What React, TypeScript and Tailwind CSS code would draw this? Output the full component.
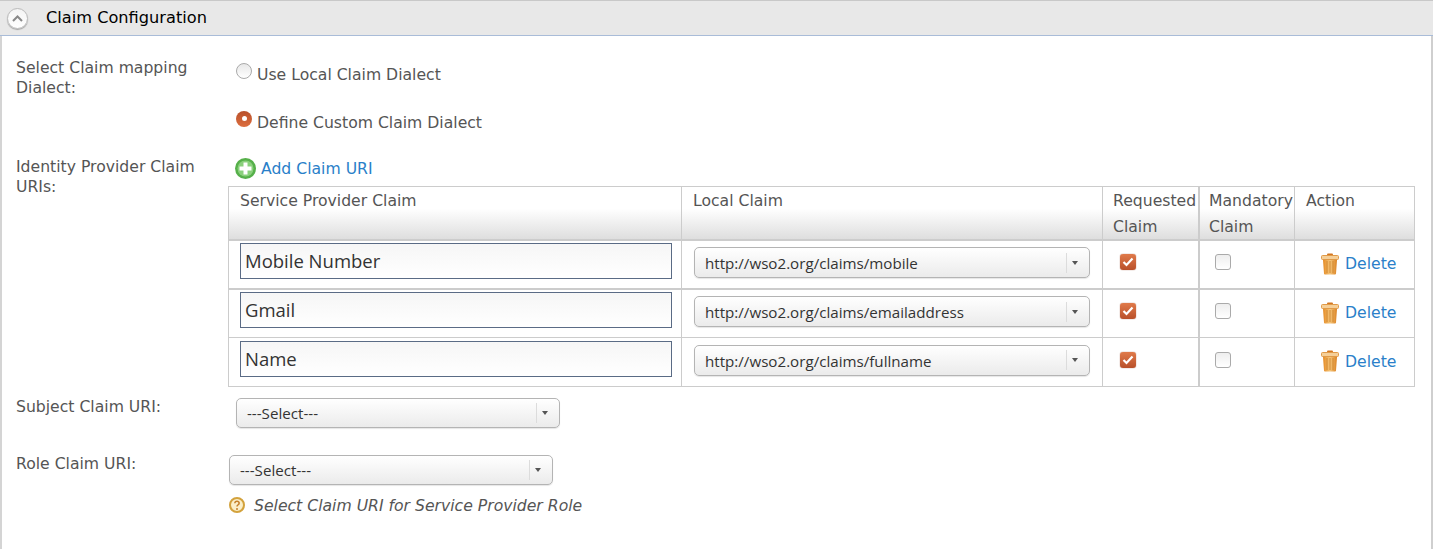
const font = "font-['DejaVu_Sans',sans-serif]";

const SelectBox = ({ label, width, height = "h-[30px]" }: { label: string; width: string; height?: string }) => {
    return (
        <div className={`${width} ${height} flex items-center rounded-[5px] border border-[#b4b4b4] bg-gradient-to-b from-white to-[#ebebeb] shadow-[0_1px_1px_rgba(0,0,0,0.1)]`}>
            <span className="flex-1 pl-[10px] pt-[2px] font-['Open_Sans',sans-serif] text-[15.15px] text-[#333]">{label}</span>
            <span className="h-[20px] w-px bg-[#dcdcdc]" />
            <span className="mr-[6px] flex w-[16px] justify-center">
                <span className="h-0 w-0 border-x-[3px] border-t-[4px] border-x-transparent border-t-[#555]" />
            </span>
        </div>
    );
};

const TrashIcon = () => {
    return (
        <svg width="18" height="22" viewBox="0 0 18 22">
            <defs>
                <linearGradient id="trash" x1="0" x2="1" y1="0" y2="0">
                    <stop offset="0" stopColor="#e58a22" />
                    <stop offset="0.5" stopColor="#f5c67c" />
                    <stop offset="1" stopColor="#db8120" />
                </linearGradient>
            </defs>
            <rect x="6" y="0.5" width="6" height="3" rx="1" fill="#d4761f" />
            <rect x="0.5" y="2.5" width="17" height="4" rx="1" fill="#f5cf98" stroke="#e09a48" />
            <path d="M2 7h14l-1 13.5q0 1-1 1H4q-1 0-1-1z" fill="url(#trash)" />
            <path d="M6 8v12M9 8v12M12 8v12" stroke="#d28a32" strokeWidth="1" />
        </svg>
    );
};

const PlusIcon = () => {
    return (
        <svg width="21" height="21" viewBox="0 0 21 21">
            <circle cx="10.5" cy="10.5" r="10.5" fill="#56b04a" />
            <circle cx="10.5" cy="10.5" r="8" fill="#8ad07c" />
            <path d="M10.5 4.5v12M4.5 10.5h12" stroke="#fff" strokeWidth="4" />
        </svg>
    );
};

const HelpIcon = () => {
    return (
        <svg width="16" height="16" viewBox="0 0 16 16">
            <circle cx="8" cy="8" r="7" fill="#fbefc8" stroke="#d3a23c" strokeWidth="2" />
            <path d="M5.8 6.2q.2-2 2.2-2t2.2 1.9q0 1.1-1.2 1.8-1 .5-1 1.7" fill="none" stroke="#c5802a" strokeWidth="1.5" />
            <circle cx="8" cy="12" r="1" fill="#c5802a" />
        </svg>
    );
};

const Checked = () => {
    return (
        <span className="flex h-[16px] w-[16px] items-center justify-center rounded-[3px] bg-gradient-to-b from-[#e07a4a] to-[#b9502a] shadow-[0_0_1px_#8a3a1c]">
            <svg width="12" height="10" viewBox="0 0 12 10">
                <path d="M1.5 5l3 3L10.5 1.5" fill="none" stroke="#fff" strokeWidth="2.2" />
            </svg>
        </span>
    );
};

// the third row sits 1px closer to its top border, so its cells need 1px more padding
const rows = [
    { name: "Mobile Number", claim: "http://wso2.org/claims/mobile", rowClass: "h-[49px] border-b-2 border-[#cccccc]", inputPad: "pt-[2px]", selectPad: "pt-[6px]", boxPad: "pt-[13px]", deletePad: "pt-[11px]" },
    { name: "Gmail", claim: "http://wso2.org/claims/emailaddress", rowClass: "h-[48px]", inputPad: "pt-[2px]", selectPad: "pt-[6px]", boxPad: "pt-[13px]", deletePad: "pt-[11px]" },
    { name: "Name", claim: "http://wso2.org/claims/fullname", rowClass: "h-[49px]", inputPad: "pt-[3px]", selectPad: "pt-[7px]", boxPad: "pt-[14px]", deletePad: "pt-[12px]" },
];

const headCell = "border border-[#cccccc] border-b-2 pt-[1px] align-top text-left font-normal leading-[25.5px] text-[#555]";
const bodyCell = "border border-[#cccccc] align-top";

const App = () => {
    return (
        <div className={`h-[549px] w-[1436px] overflow-hidden bg-white text-[15.65px] text-[#555] ${font}`}>
            <div className="h-full w-[1433px] border-x-2 border-x-[#d4d4d4] border-r-[#cfcfcf]">
                <div className="-ml-[2px] flex h-[36px] w-[1433px] items-center border-t border-b border-t-[#c8c8c8] border-b-[#a9bcd8] bg-[#e8e8e8]">
                    <span className="ml-[7px] flex h-[21px] w-[21px] items-center justify-center rounded-full border border-[#bbb] bg-gradient-to-b from-[#f4f4f4] to-white shadow-[0_1px_1px_rgba(0,0,0,0.3)]">
                        <svg width="11" height="8" viewBox="0 0 11 8">
                            <path d="M1 7l4.5-4.5L10 7" fill="none" stroke="#888" strokeWidth="2" />
                        </svg>
                    </span>
                    <span className="ml-[18px] text-[16.2px] text-black">Claim Configuration</span>
                </div>

                <div className="flex pt-[22px]">
                    <div className="w-[234px] pl-[14px] leading-[20px]">
                        <p className="w-[190px]">Select Claim mapping Dialect:</p>
                    </div>
                    <div className="pt-[7px]">
                        <label className="flex h-[21px] items-center gap-[5px]">
                            <span className="mb-[10px] h-[16px] w-[16px] rounded-full border border-[#aaa] bg-gradient-to-b from-[#e8e8e8] to-white" />
                            <span className="pb-[2px]">Use Local Claim Dialect</span>
                        </label>
                        <label className="mt-[27px] flex h-[21px] items-center gap-[5px]">
                            <span className="mb-[10px] flex h-[16px] w-[16px] items-center justify-center rounded-full bg-gradient-to-b from-[#b8502a] to-[#dd6e3f]">
                                <span className="h-[5px] w-[5px] rounded-full bg-white" />
                            </span>
                            <span className="pb-[2px]">Define Custom Claim Dialect</span>
                        </label>
                    </div>
                </div>

                <div className="mt-[23px] flex">
                    <div className="w-[226px] pl-[14px] leading-[20px]">
                        <p className="w-[190px]">Identity Provider Claim URIs:</p>
                    </div>
                    <div>
                        <div className="ml-[7px] mt-[1px] flex h-[21px] items-center gap-[5px] text-[#2a7fc9]">
                            <PlusIcon />
                            <span className="pt-[1px]">Add Claim URI</span>
                        </div>
                        <table className="mt-[7px] w-[1187px] table-fixed border-collapse">
                            <thead>
                                <tr className="h-[52px] bg-gradient-to-b from-white from-40% to-[#dcdcdc]">
                                    <th className={`${headCell} w-[453px] pl-[11px]`}>Service Provider Claim</th>
                                    <th className={`${headCell} w-[421px] pl-[11px]`}>Local Claim</th>
                                    <th className={`${headCell} w-[96px] whitespace-nowrap border-r-2 pl-[10px]`}>Requested<br />Claim</th>
                                    <th className={`${headCell} w-[96px] whitespace-nowrap pl-[9.5px]`}>Mandatory<br />Claim</th>
                                    <th className={`${headCell} pl-[11px]`}>Action</th>
                                </tr>
                            </thead>
                            <tbody>
                                {rows.map((row) => (
                                    <tr key={row.name} className={row.rowClass}>
                                        <td className={`${bodyCell} px-[11px] ${row.inputPad}`}>
                                            <div className="flex h-[36px] w-[432px] items-center border border-[#5a6b85] bg-gradient-to-b from-[#f6f6f6] to-white pl-[4px] font-['Open_Sans',sans-serif] text-[18.5px] text-[#333]">
                                                {row.name}
                                            </div>
                                        </td>
                                        <td className={`${bodyCell} px-[12px] ${row.selectPad}`}>
                                            <SelectBox label={row.claim} width="w-[396px]" height="h-[31px]" />
                                        </td>
                                        <td className={`${bodyCell} border-r-2 pl-[17px] ${row.boxPad}`}><Checked /></td>
                                        <td className={`${bodyCell} pl-[15px] ${row.boxPad}`}>
                                            <span className="block h-[16px] w-[16px] rounded-[3px] border border-[#aaa] bg-gradient-to-b from-[#eee] to-white" />
                                        </td>
                                        <td className={`${bodyCell} pl-[26px] ${row.deletePad}`}>
                                            <div className="flex items-center gap-[6px] text-[#2a7fc9]">
                                                <TrashIcon />
                                                Delete
                                            </div>
                                        </td>
                                    </tr>
                                ))}
                            </tbody>
                        </table>
                    </div>
                </div>

                <div className="mt-[11px] flex">
                    <div className="-mt-[1px] w-[234px] pl-[14px] leading-[20px]">Subject Claim URI:</div>
                    <SelectBox label="---Select---" width="w-[324px]" />
                </div>

                <div className="mt-[27px] flex">
                    <div className="-mt-[1px] w-[227px] pl-[14px] leading-[20px]">Role Claim URI:</div>
                    <div>
                        <SelectBox label="---Select---" width="w-[324px]" />
                        <div className="mt-[9px] flex items-center gap-[9px] italic">
                            <HelpIcon />
                            Select Claim URI for Service Provider Role
                        </div>
                    </div>
                </div>
            </div>
        </div>
    );
};

export default App;
